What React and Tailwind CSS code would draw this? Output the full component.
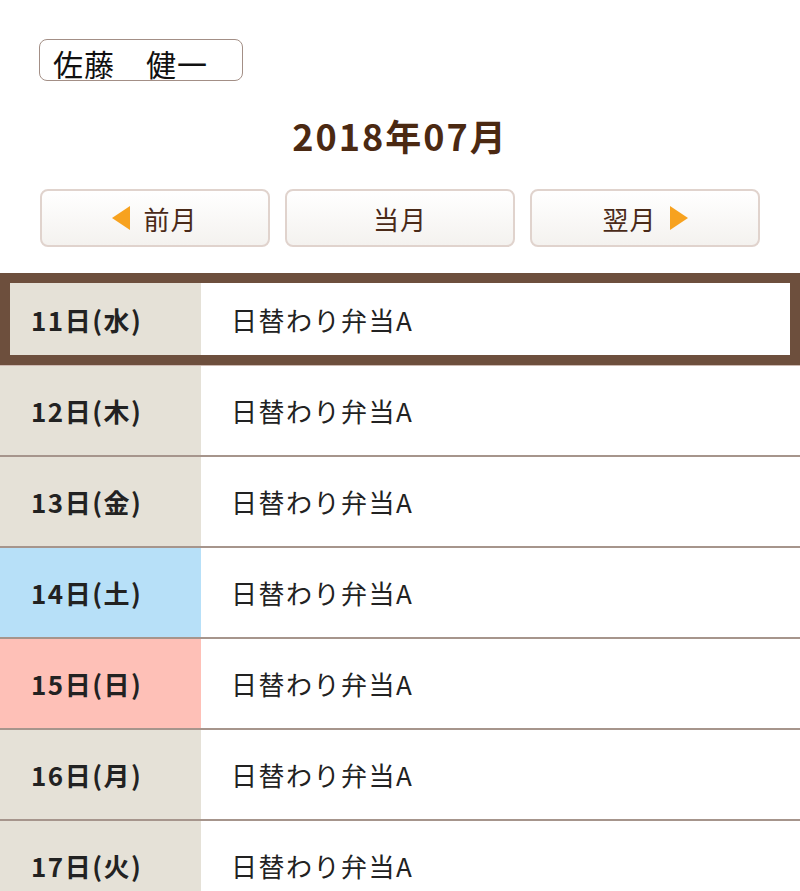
import React from "react";

const font = { fontFamily: '"Noto Sans CJK JP", "Noto Sans", sans-serif' };

const rows = [
  { d: "12日(木)", bg: "bg-[#e5e1d7]" },
  { d: "13日(金)", bg: "bg-[#e5e1d7]" },
  { d: "14日(土)", bg: "bg-[#b7e0f8]" },
  { d: "15日(日)", bg: "bg-[#fec0b7]" },
  { d: "16日(月)", bg: "bg-[#e5e1d7]" },
  { d: "17日(火)", bg: "bg-[#e5e1d7]" },
];

function TriLeft() {
  return (
    <svg width="18" height="24" viewBox="0 0 18 24">
      <polygon points="18,0 18,24 0,12" fill="#f7a21f" />
    </svg>
  );
}
function TriRight() {
  return (
    <svg width="18" height="24" viewBox="0 0 18 24">
      <polygon points="0,0 0,24 18,12" fill="#f7a21f" />
    </svg>
  );
}

const btn =
  "flex-1 h-[58px] flex items-center justify-center gap-[13px] rounded-[8px] border-2 border-[#e0d3cd] bg-gradient-to-b from-white to-[#f4f2ef] text-[26px] tracking-[1px] text-[#4a2a18]";

export default function App() {
  return (
    <div className="w-[800px] h-[891px] overflow-hidden bg-white" style={font}>
      <div className="pt-[39px] px-[39px]">
        <div className="w-[204px] h-[42px] rounded-[8px] border-[1.5px] border-[#a38f86] pl-[13px] pt-[6px] text-[30px] leading-[34px] tracking-[1px] text-[#111] whitespace-pre">
          佐藤　健一
        </div>
      </div>
      <div className="mt-[33px] h-[42px] text-center text-[36px] leading-[42px] font-bold tracking-[2px] text-[#4b2912]">
        2018年07月
      </div>
      <div className="mt-[33px] px-[40px] flex gap-[15px]">
        <div className={btn}>
          <TriLeft />
          <span>前月</span>
        </div>
        <div className={btn}>
          <span>当月</span>
        </div>
        <div className={btn}>
          <span>翌月</span>
          <TriRight />
        </div>
      </div>
      <div className="mt-[26px]">
        <div className="h-[92px] border-[10px] border-[#6d4f3d] flex">
          <div className="w-[191px] bg-[#e5e1d7] flex items-center pl-[21px] text-[26px] font-bold tracking-[1.5px] text-[#222]">
            11日(水)
          </div>
          <div className="flex-1 bg-white flex items-center pl-[30px] text-[26px] tracking-[1.5px] text-[#222]">
            日替わり弁当A
          </div>
        </div>
        <div className="h-px bg-[#cdb9b1]" />
        {rows.map((r) => (
          <div key={r.d} className="h-[91px] flex border-b-2 border-[#a6958c]">
            <div className={`w-[201px] ${r.bg} flex items-center pl-[31px] text-[26px] font-bold tracking-[1.5px] text-[#222]`}>
              {r.d}
            </div>
            <div className="flex-1 bg-white flex items-center pl-[30px] text-[26px] tracking-[1.5px] text-[#222]">
              日替わり弁当A
            </div>
          </div>
        ))}
      </div>
    </div>
  );
}
